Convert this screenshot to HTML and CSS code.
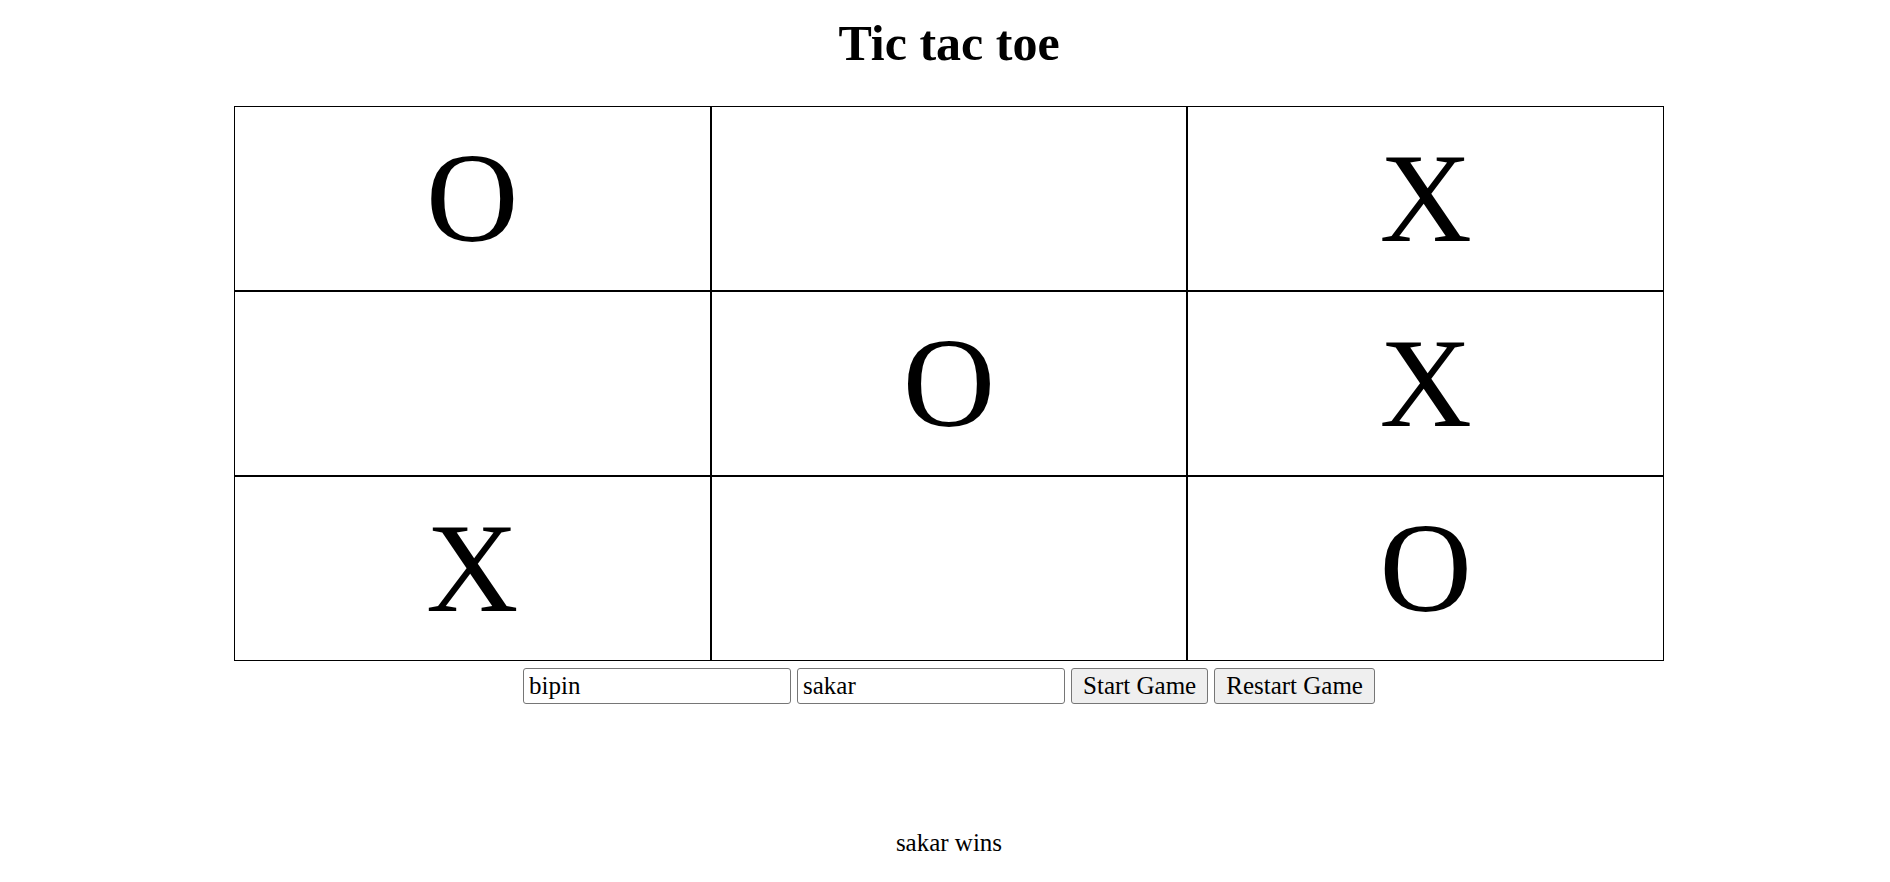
FILE: index.html
```html
<!DOCTYPE html>
<html lang="en">
<head>
<meta charset="utf-8">
<title>Tic tac toe</title>
<link rel="stylesheet" href="styles.css">
</head>
<body>
<h1 class="title">Tic tac toe</h1>
<main class="game">
<div class="board">
<div class="cell">O</div><div class="cell"></div><div class="cell">X</div>
<div class="cell"></div><div class="cell">O</div><div class="cell">X</div>
<div class="cell">X</div><div class="cell"></div><div class="cell">O</div>
</div>
<form class="controls">
<input class="player" type="text" aria-label="Player one" value="bipin">
<input class="player" type="text" aria-label="Player two" value="sakar">
<button class="action" type="button">Start Game</button>
<button class="action" type="button">Restart Game</button>
</form>
<p class="result">sakar wins</p>
</main>
</body>
</html>
```
FILE: styles.css
```css
* {
  box-sizing: border-box;
}

body {
  margin: 0 0 0 8px;
  background: #fff;
  color: #000;
  font: 25px/28px "Liberation Serif", "Times New Roman", serif;
}

.title {
  margin: 15px 0 35px;
  font-size: 50px;
  line-height: 56px;
  text-align: center;
}

.board {
  display: grid;
  grid-template-columns: repeat(3, 1fr);
  grid-auto-rows: 185px;
  width: 76%;
  margin: 0 auto;
}

.cell {
  display: flex;
  align-items: center;
  justify-content: center;
  padding-bottom: 2px;
  border: 1px solid #000;
  font-size: 128px;
  line-height: 1;
}

.controls {
  display: flex;
  justify-content: center;
  gap: 6px;
  margin-top: 7px;
}

.player,
.action {
  height: 36px;
  border: 1px solid #767676;
  border-radius: 3px;
  color: #000;
  font: inherit;
}

.player {
  width: 268px;
  padding: 0 5px;
  background: #fff;
}

.action {
  padding: 0 11px;
  background: #efefef;
}

.result {
  margin: 125px 0 0;
  text-align: center;
}
```
